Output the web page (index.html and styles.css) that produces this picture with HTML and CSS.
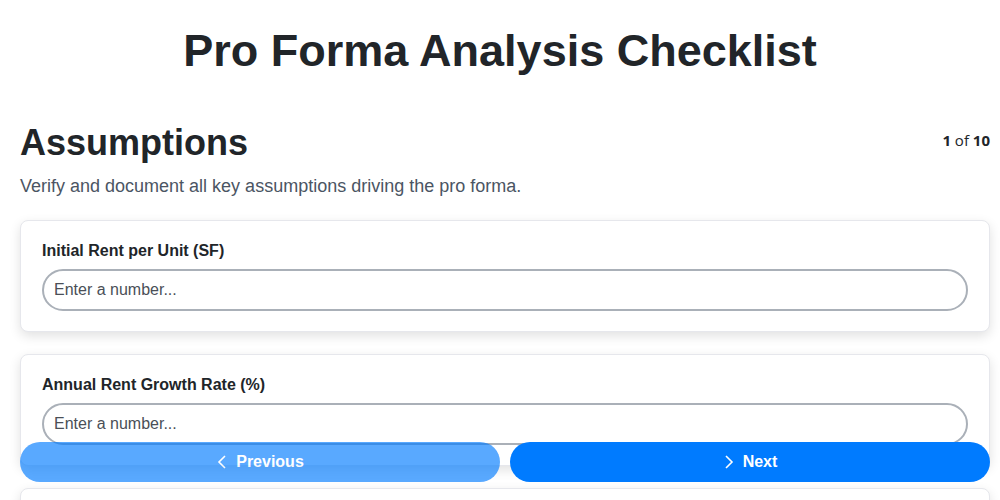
FILE: index.html
```html
<!DOCTYPE html>
<html lang="en">
<head>
  <meta charset="UTF-8">
  <meta name="viewport" content="width=device-width, initial-scale=1.0">
  <title>Pro Forma Analysis Checklist</title>
  <link rel="stylesheet" href="styles.css">
</head>
<body>

  <h1 class="title">Pro Forma Analysis Checklist</h1>

  <div class="page">
    <!-- Step header -->
    <div class="step-head">
      <h2>Assumptions</h2>
      <span class="step-count"><b>1</b> of <b>10</b></span>
    </div>
    <p class="step-desc">Verify and document all key assumptions driving the pro forma.</p>

    <!-- Questions -->
    <div class="card">
      <label for="q1">Initial Rent per Unit (SF)</label>
      <input type="text" id="q1" placeholder="Enter a number...">
    </div>
    <div class="card">
      <label for="q2">Annual Rent Growth Rate (%)</label>
      <input type="text" id="q2" placeholder="Enter a number...">
    </div>
    <div class="card">
      <label for="q3">Vacancy Rate (%)</label>
      <input type="text" id="q3" placeholder="Enter a number...">
    </div>
  </div>

  <!-- Nav -->
  <div class="nav">
    <button class="btn" disabled>
      <svg width="12" height="16" viewBox="0 0 12 16"><path d="M9 2 3 8l6 6" fill="none" stroke="#fff" stroke-width="1.6"/></svg>
      Previous
    </button>
    <button class="btn">
      <svg width="12" height="16" viewBox="0 0 12 16"><path d="M3 2l6 6-6 6" fill="none" stroke="#fff" stroke-width="1.6"/></svg>
      Next
    </button>
  </div>

</body>
</html>
```

FILE: styles.css
```css
* {
  box-sizing: border-box;
}
body {
  margin: 0;
  font-family: "Liberation Sans", Arial, sans-serif;
  background-color: #fff;
  color: #212529;
  overflow: hidden;
}
.title {
  margin: 25px 0 45px;
  font-size: 45px;
  text-align: center;
  line-height: 1.15;
}
.page {
  padding: 0 10px 0 20px;
}
.step-head {
  display: flex;
  justify-content: space-between;
  align-items: center;
}
.step-head h2 {
  margin: 0;
  font-size: 36px;
  line-height: 1.15;
}
.step-count {
  font-family: "Open Sans", sans-serif;
  font-size: 15px;
  margin-bottom: 4px;
}
.step-desc {
  margin: 13px 0 23px;
  font-size: 18px;
  color: #4b5563;
}
.card {
  padding: 21px 21px 20px;
  margin-bottom: 22px;
  border: 1px solid #e6e7ec;
  border-radius: 8px;
  background: #fff;
  box-shadow: 0 4px 12px rgba(0, 0, 0, 0.12);
}
.card label {
  display: block;
  margin-bottom: 9px;
  font-size: 16px;
  font-weight: bold;
}
.card input {
  display: block;
  width: 100%;
  padding: 10px;
  border: 2px solid #aab0b8;
  border-radius: 21px;
  font-family: inherit;
  font-size: 16px;
  color: #212529;
  outline: none;
}
.card input::placeholder {
  color: #4a4f57;
}
.nav {
  position: fixed;
  left: 20px;
  right: 10px;
  bottom: 18px;
  display: flex;
  gap: 10px;
}
.btn {
  flex: 1;
  height: 40px;
  display: flex;
  justify-content: center;
  align-items: center;
  gap: 8px;
  border: none;
  border-radius: 20px;
  background-color: #007bff;
  color: #fff;
  font-family: inherit;
  font-size: 16px;
  font-weight: bold;
  cursor: pointer;
}
.btn:disabled {
  opacity: 0.65;
  cursor: default;
}
```
